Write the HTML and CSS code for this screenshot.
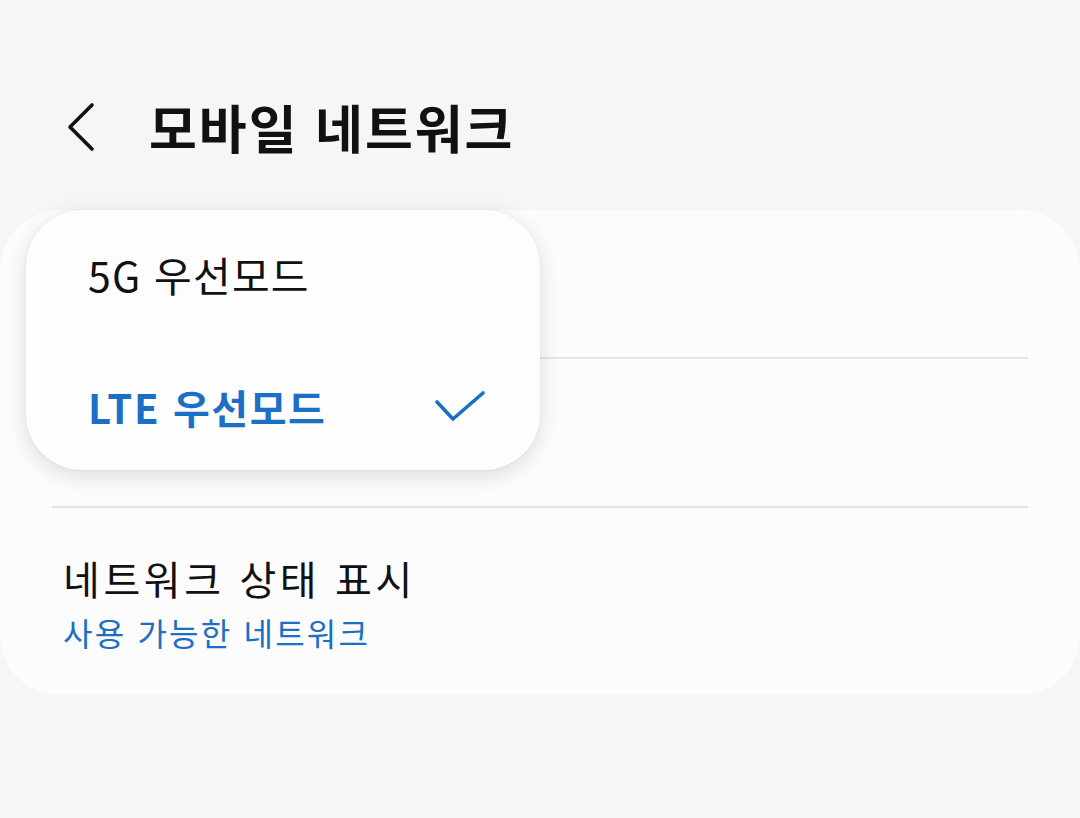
FILE: index.html
```html
<!DOCTYPE html>
<html lang="ko">
<head>
<meta charset="utf-8">
<link rel="stylesheet" href="styles.css">
</head>
<body>
<div class="screen">
  <header class="appbar">
    <button class="back" aria-label="뒤로">
      <svg width="30" height="50" viewBox="0 0 30 50"><path d="M26 3 L4 25 L26 47" fill="none" stroke="#111" stroke-width="3.6" stroke-linecap="round" stroke-linejoin="round"/></svg>
    </button>
    <h1 class="title">모바일 네트워크</h1>
  </header>

  <section class="card">
    <div class="row row-empty"></div>
    <div class="divider"></div>
    <div class="row row-empty"></div>
    <div class="divider"></div>
    <div class="row row-status">
      <div class="row-title">네트워크 상태 표시</div>
      <div class="row-sub">사용 가능한 네트워크</div>
    </div>

    <div class="popup">
      <div class="opt">5G 우선모드</div>
      <div class="opt opt-selected">
        <span>LTE 우선모드</span>
        <svg class="check" width="52" height="34" viewBox="0 0 52 34"><path d="M3 12 L19 29 L49 3" fill="none" stroke="#1b6fc5" stroke-width="3.6" stroke-linecap="round" stroke-linejoin="round"/></svg>
      </div>
    </div>
  </section>
</div>
</body>
</html>
```

FILE: styles.css
```css
html, body {
  margin: 0;
  padding: 0;
  background: #f6f6f6;
}
body {
  font-family: "Noto Sans CJK KR", "Noto Sans", sans-serif;
  color: #111;
  width: 1080px;
  height: 818px;
  overflow: hidden;
}
.screen {
  display: flex;
  flex-direction: column;
}
.appbar {
  height: 210px;
  display: flex;
  align-items: center;
  padding-left: 66px;
  box-sizing: border-box;
  padding-top: 44px;
}
.back {
  background: none;
  border: 0;
  padding: 0;
  width: 30px;
  height: 50px;
  display: flex;
}
.title {
  margin: 0 0 0 53px;
  font-size: 52px;
  font-weight: 700;
  letter-spacing: 2px;
  line-height: 1;
}
.card {
  position: relative;
  background: #fcfcfc;
  border-radius: 60px;
  height: 485px;
  display: flex;
  flex-direction: column;
}
.row-empty {
  height: 147px;
}
.divider {
  height: 2px;
  margin: 0 52px;
  background: #e4e4e4;
}
.row-status {
  padding: 44px 63px 0;
}
.row-title {
  font-size: 40px;
  line-height: 52px;
  letter-spacing: 3.6px;
  color: #111;
}
.row-sub {
  font-size: 32px;
  line-height: 44px;
  margin-top: 6px;
  letter-spacing: 2.2px;
  color: #1b6fc5;
}
.popup {
  position: absolute;
  left: 26px;
  top: 0;
  width: 514px;
  height: 260px;
  background: #fdfdfd;
  border-radius: 56px;
  box-shadow: 0 6px 22px rgba(0,0,0,0.13), 0 0 3px rgba(0,0,0,0.05);
  box-sizing: border-box;
  padding: 32px 54px 0 62px;
  display: flex;
  flex-direction: column;
}
.opt {
  height: 130px;
  font-size: 41px;
  line-height: 1;
  letter-spacing: 1.2px;
  display: flex;
  align-items: flex-start;
  padding-top: 12px;
  box-sizing: border-box;
  color: #111;
}
.opt-selected {
  height: 70px;
  padding-top: 0;
  align-items: center;
  justify-content: space-between;
  color: #1b6fc5;
  font-weight: 700;
  font-size: 40px;
  letter-spacing: 1.6px;
}
.check {
  display: block;
}
```
